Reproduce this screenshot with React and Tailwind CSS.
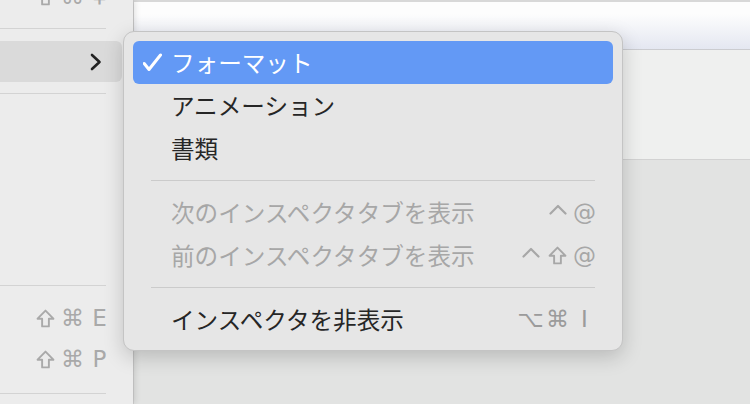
import React from "react";

const jp = { fontFamily: '"Noto Sans CJK JP", "Noto Sans", sans-serif' };
const sym = { fontFamily: '"DejaVu Sans", "Noto Sans CJK JP", sans-serif' };

function ShiftIcon() {
  return (
    <svg width="19" height="19" viewBox="0 0 18 18" fill="none">
      <path d="M9 1.5 L16.5 9.2 L12.2 9.2 L12.2 16.5 L5.8 16.5 L5.8 9.2 L1.5 9.2 Z" stroke="currentColor" strokeWidth="1.8" strokeLinejoin="round" />
    </svg>
  );
}

function CtrlIcon() {
  return (
    <svg width="18" height="18" viewBox="0 0 18 18" fill="none">
      <path d="M1.5 9.5 L9 2 L16.5 9.5" stroke="currentColor" strokeWidth="2.2" strokeLinecap="round" strokeLinejoin="round" />
    </svg>
  );
}

function Keys({ keys, className = "" }) {
  return (
    <div className={`flex items-center ${className}`} style={sym}>
      {keys.map((k, i) => (
        <span key={i} className="flex h-[22px] w-[27px] items-center justify-center text-[23px] leading-none">
          {k === "shift" ? <ShiftIcon /> : k === "ctrl" ? <CtrlIcon /> : k}
        </span>
      ))}
    </div>
  );
}

function Separator({ className = "" }) {
  return (
    <div className={`flex h-[21px] items-center ${className}`}>
      <div className="h-px w-full bg-[#cbcbcb]" />
    </div>
  );
}

function Item({ label, keys, disabled, selected }) {
  return (
    <div
      className={`flex h-[43px] items-center rounded-[6px] pl-[10px] pr-[15px] ${
        selected ? "bg-[#6399f5] text-white" : disabled ? "text-[#a7a7a7]" : "text-[#262626]"
      }`}
    >
      <div className="flex w-[28px] items-center">
        {selected ? (
          <svg width="20" height="20" viewBox="0 0 20 20" fill="none">
            <path d="M1.2 10.5 L6 16.5 L17.5 2" stroke="white" strokeWidth="3" strokeLinecap="round" strokeLinejoin="round" />
          </svg>
        ) : null}
      </div>
      <span className="flex-1 text-[23.6px] leading-none" style={jp}>
        {label}
      </span>
      {keys ? <Keys keys={keys} className={disabled ? "text-[#a7a7a7]" : "text-[#9b9b9b]"} /> : null}
    </div>
  );
}

function LeftRow({ keys, className = "" }) {
  return (
    <div className={`flex h-[41px] items-center justify-end pr-[20px] text-[#a9a9a9] ${className}`}>
      <Keys keys={keys} />
    </div>
  );
}

function LeftSep({ className = "" }) {
  return (
    <div className={`flex h-[22px] items-center pr-[27px] ${className}`}>
      <div className="h-px w-full bg-[#d3d3d3]" />
    </div>
  );
}

export default function App() {
  return (
    <div className="relative flex h-[404px] w-[750px] overflow-hidden bg-[#e2e3e2]">
      <aside className="z-10 flex w-[133px] flex-col bg-[#ececec] shadow-[2px_0_6px_rgba(0,0,0,0.12)]">
        <LeftRow keys={["shift", "⌘", "￥"]} className="-mt-[24px] h-[42px]" />
        <LeftSep />
        <div className="mt-px flex h-[42px] w-[122px] items-center justify-end rounded-r-[6px] bg-[#dadada] pr-[20px]">
          <svg width="12" height="18" viewBox="0 0 12 18" fill="none">
            <path d="M2 2 L9.5 9 L2 16" stroke="#222" strokeWidth="2.6" strokeLinecap="round" strokeLinejoin="round" />
          </svg>
        </div>
        <LeftSep />
        <div className="h-[171px]" />
        <LeftSep />
        <div className="h-[2px]" />
        <LeftRow keys={["shift", "⌘", "E"]} />
        <LeftRow keys={["shift", "⌘", "P"]} />
        <LeftSep className="mt-[2px]" />
      </aside>

      <main className="flex flex-1 flex-col border-l border-[#d0d0d0]">
        <div className="h-[2px] bg-[#d8d8d8]" />
        <div className="h-[48px] border-b border-[#cbccd0] bg-gradient-to-b from-[#fdfdfd] from-25% to-[#e4e7f1]" />
        <div className="h-[110px] border-b border-[#d2d2d2] bg-[#eff0ef]" />
        <div className="flex-1 bg-[#e2e3e2]" />
      </main>

      <div className="absolute left-[123px] top-[31px] z-20 w-[500px] rounded-[11px] border border-[#c4c4c4] bg-[#e6e6e6] px-[9px] py-[9px] shadow-[0_6px_20px_rgba(0,0,0,0.18)]">
        <Item label="フォーマット" selected />
        <Item label="アニメーション" />
        <Item label="書類" />
        <Separator className="px-[18px]" />
        <Item label="次のインスペクタタブを表示" keys={["ctrl", "@"]} disabled />
        <Item label="前のインスペクタタブを表示" keys={["ctrl", "shift", "@"]} disabled />
        <Separator className="px-[18px]" />
        <Item label="インスペクタを非表示" keys={["⌥", "⌘", "I"]} />
      </div>
    </div>
  );
}
